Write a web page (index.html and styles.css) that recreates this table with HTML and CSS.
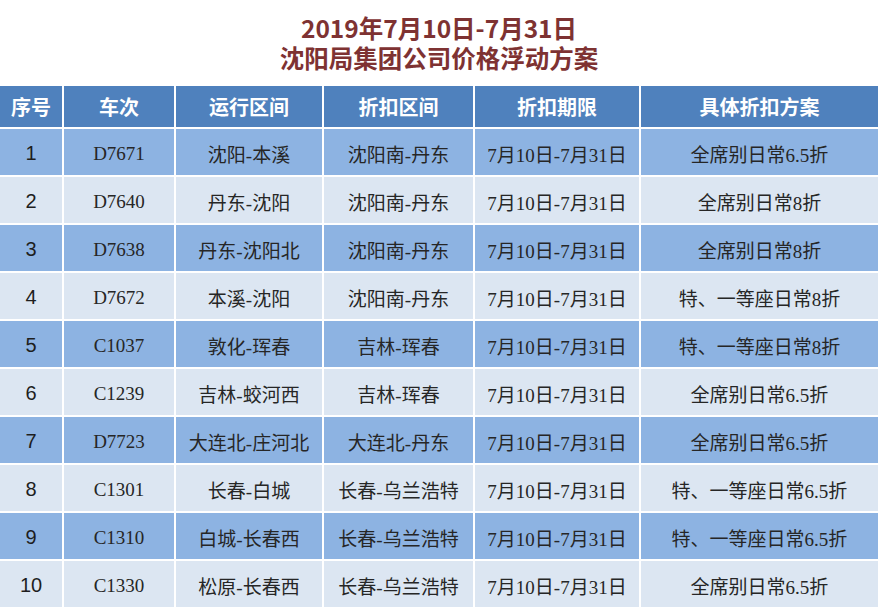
FILE: index.html
```html
<!DOCTYPE html>
<html lang="zh-CN">
<head>
<meta charset="utf-8">
<title>沈阳局集团公司价格浮动方案</title>
<link rel="stylesheet" href="styles.css">
</head>
<body>
<div class="page">
  <header class="title">
    <div class="title-line">2019年7月10日-7月31日</div>
    <div class="title-line">沈阳局集团公司价格浮动方案</div>
  </header>
  <table class="fare">
    <colgroup>
      <col class="c1"><col class="c2"><col class="c3"><col class="c4"><col class="c5"><col class="c6">
    </colgroup>
    <thead>
      <tr><th>序号</th><th>车次</th><th>运行区间</th><th>折扣区间</th><th>折扣期限</th><th>具体折扣方案</th></tr>
    </thead>
    <tbody>
      <tr class="odd"><td class="num">1</td><td>D7671</td><td>沈阳-本溪</td><td>沈阳南-丹东</td><td>7月10日-7月31日</td><td>全席别日常6.5折</td></tr>
      <tr class="even"><td class="num">2</td><td>D7640</td><td>丹东-沈阳</td><td>沈阳南-丹东</td><td>7月10日-7月31日</td><td>全席别日常8折</td></tr>
      <tr class="odd"><td class="num">3</td><td>D7638</td><td>丹东-沈阳北</td><td>沈阳南-丹东</td><td>7月10日-7月31日</td><td>全席别日常8折</td></tr>
      <tr class="even"><td class="num">4</td><td>D7672</td><td>本溪-沈阳</td><td>沈阳南-丹东</td><td>7月10日-7月31日</td><td>特、一等座日常8折</td></tr>
      <tr class="odd"><td class="num">5</td><td>C1037</td><td>敦化-珲春</td><td>吉林-珲春</td><td>7月10日-7月31日</td><td>特、一等座日常8折</td></tr>
      <tr class="even"><td class="num">6</td><td>C1239</td><td>吉林-蛟河西</td><td>吉林-珲春</td><td>7月10日-7月31日</td><td>全席别日常6.5折</td></tr>
      <tr class="odd"><td class="num">7</td><td>D7723</td><td>大连北-庄河北</td><td>大连北-丹东</td><td>7月10日-7月31日</td><td>全席别日常6.5折</td></tr>
      <tr class="even"><td class="num">8</td><td>C1301</td><td>长春-白城</td><td>长春-乌兰浩特</td><td>7月10日-7月31日</td><td>特、一等座日常6.5折</td></tr>
      <tr class="odd"><td class="num">9</td><td>C1310</td><td>白城-长春西</td><td>长春-乌兰浩特</td><td>7月10日-7月31日</td><td>特、一等座日常6.5折</td></tr>
      <tr class="even"><td class="num">10</td><td>C1330</td><td>松原-长春西</td><td>长春-乌兰浩特</td><td>7月10日-7月31日</td><td>全席别日常6.5折</td></tr>
    </tbody>
  </table>
</div>
</body>
</html>
```

FILE: styles.css
```css
html, body {
  margin: 0;
  padding: 0;
  background: #ffffff;
}

.page {
  width: 878px;
}

.title {
  padding: 13px 0 13px;
  text-align: center;
  color: #7e3232;
  font-family: "Noto Sans CJK SC", "Noto Sans", sans-serif;
  font-weight: 700;
  font-size: 24.5px;
  line-height: 30px;
}

.fare {
  width: 878px;
  table-layout: fixed;
  border-collapse: collapse;
  font-family: "Liberation Serif", "Noto Sans CJK SC", serif;
  font-size: 19px;
  color: #262626;
}

.c1 { width: 63px; }
.c2 { width: 112px; }
.c3 { width: 148px; }
.c4 { width: 151px; }
.c5 { width: 166px; }
.c6 { width: 238px; }

.fare th,
.fare td {
  border: 2px solid #ffffff;
  text-align: center;
  vertical-align: middle;
  padding: 0;
  white-space: nowrap;
}

.fare tr > :first-child { border-left: 0; }
.fare tr > :last-child { border-right: 0; }
.fare thead th { border-top: 0; }

.fare thead tr {
  height: 42px;
}

.fare th {
  background: #4f81bd;
  color: #ffffff;
  font-family: "Noto Sans CJK SC", "Noto Sans", sans-serif;
  font-weight: 700;
  font-size: 20px;
}

.fare tbody tr {
  height: 48px;
}

.fare td {
  padding-top: 3px;
}

.odd td { background: #8db3e2; }
.even td { background: #dce6f2; }

.fare td.num {
  font-family: "Liberation Sans", Arial, sans-serif;
  font-size: 20px;
  color: #1e1e1e;
}
```
